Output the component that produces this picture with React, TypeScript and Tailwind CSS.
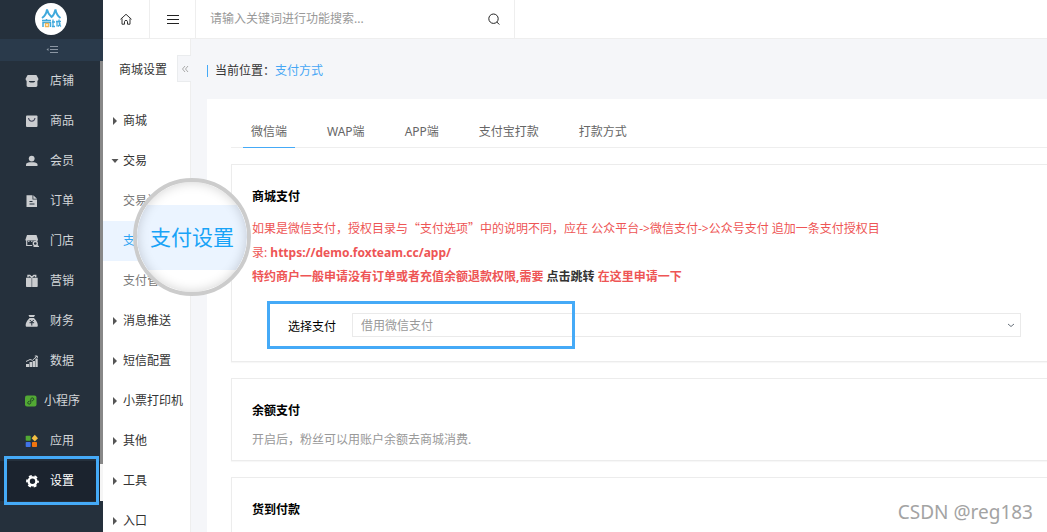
import type { ReactNode } from "react";

const solid = "size-[14px] shrink-0";

function ShopIcon() {
  return (
    <svg className={solid} viewBox="0 0 14 14" fill="#cbcdd0" aria-hidden="true">
      <path d="M2.600 1h8.800l1.900 3.400c.3 1.200-.3 2.300-1.400 2.600H2.100C1 6.700.400 5.600.700 4.400z" />
      <path d="M1.600 7h2.200c.3 1.300 1.200 1.600 3.200 1.600S9.900 8.300 10.200 7h2.200v4.500c0 .8-.6 1.400-1.400 1.400H3c-.8 0-1.400-.6-1.400-1.400z" />
    </svg>
  );
}

function BagIcon() {
  return (
    <svg className={solid} viewBox="0 0 14 14" aria-hidden="true">
      <rect x="1" y="1.500" width="11.500" height="11.500" rx="1" fill="#cbcdd0" />
      <path d="M3.500 4c.7 4.300 5.800 4.300 6.500 0" fill="none" stroke="#44475c" strokeWidth="1.100" />
    </svg>
  );
}

function UserIcon() {
  return (
    <svg className={solid} viewBox="0 0 14 14" fill="#cbcdd0" aria-hidden="true">
      <circle cx="6.700" cy="4.600" r="2.900" />
      <path d="M1 12V10.500C1 9 3 8.400 4.500 8.200h4.400c1.500.2 3.600.8 3.600 2.300V12z" />
    </svg>
  );
}

function OrderIcon() {
  return (
    <svg className={solid} viewBox="0 0 14 14" aria-hidden="true">
      <path d="M1.500 1.200H7.500V5.500H12V13H1.500zM8.300 1.200 12 4.800H8.300z" fill="#cbcdd0" />
      <path d="M4.500 7.500h3M4.500 10h5" stroke="#25303c" strokeWidth="1" />
    </svg>
  );
}

function StoreIcon() {
  return (
    <svg className={solid} viewBox="0 0 14 14" aria-hidden="true">
      <path d="M2 1h9.500l1.500 4.500v1H.500v-1z" fill="#cbcdd0" />
      <path d="M1.700 5.500v6h5.500M11.700 5.500v2" fill="none" stroke="#cbcdd0" strokeWidth="1.200" />
      <path d="M3 7.300h1.500M6 7.300h1.500" stroke="#cbcdd0" />
      <circle cx="10.300" cy="9.500" r="2" fill="none" stroke="#cbcdd0" strokeWidth="1.300" />
      <path d="m11.500 11 1.800 1.500H8.500" fill="none" stroke="#cbcdd0" strokeWidth="1.100" />
    </svg>
  );
}

function GiftIcon() {
  return (
    <svg className={solid} viewBox="0 0 14 14" aria-hidden="true">
      <path d="M1 3.800h11.700V12c0 .6-.4 1-1 1H2c-.6 0-1-.4-1-1z" fill="#cbcdd0" />
      <path d="M3 3.300V1.500h1.800L6.800 3.300 8.800 1.500h1.900v1.800" fill="none" stroke="#cbcdd0" strokeWidth="1.400" />
      <path d="M6.800 4v9" stroke="#6b717a" strokeWidth=".9" />
    </svg>
  );
}

function MoneyIcon() {
  return (
    <svg className={solid} viewBox="0 0 14 14" aria-hidden="true">
      <path d="M3.500 1h6.500L9 3H4.500zM4.500 4h4.500c1.500 1.500 4 4.500 3.800 7.500 0 .8-.4 1.300-1.300 1.300H2c-.9 0-1.300-.5-1.300-1.300C.500 8.500 3 5.500 4.500 4z" fill="#cbcdd0" />
      <path d="m4.800 6 2 2 2-2M6.800 8v3.500M4.500 8.700h4.600" fill="none" stroke="#25303c" />
    </svg>
  );
}

function ChartIcon() {
  return (
    <svg className={solid} viewBox="0 0 14 14" aria-hidden="true">
      <path d="M1 10h3v3H1zM4.500 8h2.700v5H4.500zM7.700 7h2.300v6H7.700zM10.400 4.500h2.300V13h-2.300z" fill="#cbcdd0" />
      <path d="m1 7.500 4-2 2.500.8L12 2M9.800 2h2.500v2" fill="none" stroke="#cbcdd0" strokeWidth="1" />
    </svg>
  );
}

function MiniProgramIcon() {
  return (
    <svg className="size-3 shrink-0" viewBox="0 0 12 12" aria-hidden="true">
      <rect x="0" y=".5" width="11.500" height="11" rx="2" fill="#52a934" />
      <path d="M4.200 6.200c-2 .2-2 2.900 0 2.900 1 0 1.600-.7 1.600-1.600V4.500c0-1 .7-1.600 1.500-1.600 2 0 2 2.700 0 2.900" fill="none" stroke="#1d3f28" strokeWidth="1" strokeLinecap="round" />
    </svg>
  );
}

function AppsIcon() {
  return (
    <svg className={solid} viewBox="0 0 14 14" aria-hidden="true">
      <rect x=".7" y="1.700" width="5" height="5" rx=".8" fill="#52a934" />
      <path d="m9.800.800 3.200 3.400-3.200 3.300-3.200-3.300z" fill="#f4bf42" />
      <rect x=".7" y="8" width="5" height="5" rx=".8" fill="#4173e6" />
      <rect x="7" y="8" width="5" height="5" rx=".8" fill="#f0740f" />
    </svg>
  );
}

function GearIcon() {
  return (
    <svg className={solid} viewBox="0 0 14 14" aria-hidden="true">
      <circle cx="7.500" cy="7.300" r="3.900" fill="none" stroke="#fff" strokeWidth="2.400" />
      <circle cx="7.500" cy="7.300" r="5.500" fill="none" stroke="#fff" strokeWidth="1.800" strokeDasharray="2.900 2.860" strokeDashoffset="1.450" />
    </svg>
  );
}

type MainItem = { label: string; icon: ReactNode; gap: string; active?: boolean };

const mainItems: MainItem[] = [
  { label: "店铺", icon: <ShopIcon />, gap: "gap-[11px]" },
  { label: "商品", icon: <BagIcon />, gap: "gap-[11px]" },
  { label: "会员", icon: <UserIcon />, gap: "gap-[11px]" },
  { label: "订单", icon: <OrderIcon />, gap: "gap-[11px]" },
  { label: "门店", icon: <StoreIcon />, gap: "gap-[11px]" },
  { label: "营销", icon: <GiftIcon />, gap: "gap-[11px]" },
  { label: "财务", icon: <MoneyIcon />, gap: "gap-[11px]" },
  { label: "数据", icon: <ChartIcon />, gap: "gap-[11px]" },
  { label: "小程序", icon: <MiniProgramIcon />, gap: "gap-[7px]" },
  { label: "应用", icon: <AppsIcon />, gap: "gap-[11px]" },
  { label: "设置", icon: <GearIcon />, gap: "gap-[11px]", active: true },
];

function MainSidebar() {
  return (
    <aside className="w-[103px] shrink-0 bg-[#25303c]">
      <div className="flex h-[39px] items-center justify-center pr-0.5 pb-0.5">
        <svg className="size-8" viewBox="0 0 32 32" aria-label="商城" role="img">
          <circle cx="16" cy="16" r="16" fill="#fff" />
          <g fill="none" stroke="#3fa9dc" strokeWidth="1.900">
            <path d="M7 15c3-2 4.500-5 5-8.500.7 3 2 5.500 4.500 7.500M16 14.500c2.500-2 3.800-4.500 4.500-8 .6 3.500 2 6.500 5 8.500" />
            <path d="M7 17.500h9M11.500 16v1.500M8 24V19.500h7.500V24" strokeWidth="1.500" />
            <path d="M18 16.500v7M17 19h3M21 18.500h5M22 18.500v5M24 16.500c0 4 .5 6 2 7M17 23.500h3M25.500 20.500 23 23.500" strokeWidth="1.300" />
          </g>
          <path d="M10.500 20.500h3v3h-3z" fill="none" stroke="#f2b552" strokeWidth="1.300" />
        </svg>
      </div>
      <button type="button" aria-label="收起菜单" className="flex h-[22px] w-full items-center justify-center bg-[#2a3a4b]">
        <svg className="size-3" viewBox="0 0 12 12" fill="none" stroke="#8b96a3" aria-hidden="true">
          <path d="M4 2.500h8M4 5.500h8M4 8.500h8" />
          <path d="M2.500 4v3L.500 5.500z" fill="#8b96a3" stroke="none" />
        </svg>
      </button>
      <div className="flex">
        <nav className="flex-1">
          {mainItems.map((item) => (
            <div key={item.label} className="relative">
              <a
                href="#"
                className={`flex h-10 items-center ${item.gap} pl-[25px] ${item.active ? "bg-[#1b232e] text-white" : "text-[#d3d6d9]"}`}
              >
                {item.icon}
                {item.label}
              </a>
              {item.active && (
                <div className="pointer-events-none absolute -top-[5px] right-px -bottom-1 left-1 z-10 border-3 border-[#45aaf7]" />
              )}
            </div>
          ))}
        </nav>
        <div className="w-[3px] bg-[#f5f5f5]">
          <div className="h-11/12 bg-[#888888]" />
        </div>
      </div>
    </aside>
  );
}

function TopBar() {
  return (
    <header className="flex h-[39px] shrink-0 border-b border-[#eeeeee] bg-white text-[#333]">
      <button type="button" aria-label="首页" className="flex w-[47px] items-center justify-center border-r border-[#eeeeee]">
        <svg className="size-3" viewBox="0 0 12 12" fill="none" stroke="currentColor" aria-hidden="true">
          <path d="m.5 6.300 5.500-5 5.500 5M2 5.500v5.700h2.500V8.700c0-1.800 3-1.800 3 0v2.500H10V5.500" />
        </svg>
      </button>
      <button type="button" aria-label="菜单" className="flex w-[46px] items-center justify-center border-r border-[#eeeeee]">
        <svg className="size-3" viewBox="0 0 12 12" stroke="#222" aria-hidden="true">
          <path d="M0 2.500h12M0 6.500h12M0 10.500h12" />
        </svg>
      </button>
      <form className="flex w-[319px] items-center border-r border-[#eeeeee] px-3.5">
        <input
          type="text"
          aria-label="功能搜索"
          placeholder="请输入关键词进行功能搜索..."
          className="min-w-0 flex-1 bg-transparent outline-none placeholder:text-[#999]"
        />
        <button type="button" aria-label="搜索">
          <svg className="size-3" viewBox="0 0 12 12" fill="none" stroke="#222" aria-hidden="true">
            <circle cx="5.500" cy="5.700" r="4.700" />
            <path d="m8.800 9 2.500 2.500" />
          </svg>
        </button>
      </form>
    </header>
  );
}

function Caret({ open = false }: { open?: boolean }) {
  return (
    <svg className="size-2 shrink-0" viewBox="0 0 8 8" fill="#555" aria-hidden="true">
      <path d={open ? "M.5 2h7L4 6z" : "M2 0v8l4-4z"} />
    </svg>
  );
}

function MenuGroup({ label, open = false }: { label: string; open?: boolean }) {
  return (
    <a href="#" className="flex h-10 items-center gap-1 pl-2 whitespace-nowrap text-[#333]">
      <Caret open={open} />
      {label}
    </a>
  );
}

function Magnifier() {
  return (
    <div className="absolute top-[139px] left-[30px] z-20 flex size-[118px] items-center overflow-hidden rounded-full border-4 border-[#cccccc] bg-white">
      <div className="flex h-[65px] w-full items-center justify-center bg-[#ebf4ff] text-[21px] whitespace-nowrap text-[#18a3f7]">
        支付设置
      </div>
      <div className="absolute inset-0 rounded-full shadow-[inset_0_0_12px_rgba(0,0,0,0.18)]" />
    </div>
  );
}

function SettingsMenu() {
  const sub = "flex h-10 items-center pl-5 whitespace-nowrap";
  return (
    <aside className="relative w-22 shrink-0 border-r border-[#eeeeee] bg-white">
      <h2 className="flex h-[62px] items-center pl-4 text-[#333]">商城设置</h2>
      <button
        type="button"
        aria-label="收起"
        className="absolute top-4 -right-px flex h-[27px] w-3.5 items-center justify-center border border-r-0 border-[#eaecee] bg-[#f5f6f9]"
      >
        <svg className="size-2" viewBox="0 0 8 8" fill="none" stroke="#aaa" aria-hidden="true">
          <path d="M4 1 1.500 4 4 7M7 1 4.500 4 7 7" />
        </svg>
      </button>
      <nav>
        <MenuGroup label="商城" />
        <MenuGroup label="交易" open />
        <a href="#" className={`${sub} text-[#777]`}>交易设置</a>
        <a href="#" className={`${sub} bg-[#ebf4ff] text-[#2da3f2]`}>支付设置</a>
        <a href="#" className={`${sub} text-[#777]`}>支付管理</a>
        <MenuGroup label="消息推送" />
        <MenuGroup label="短信配置" />
        <MenuGroup label="小票打印机" />
        <MenuGroup label="其他" />
        <MenuGroup label="工具" />
        <MenuGroup label="入口" />
      </nav>
      <Magnifier />
    </aside>
  );
}

function Card({ title, children }: { title: string; children?: ReactNode }) {
  return (
    <section className="mb-4 border border-r-0 border-[#ececec] px-5 pt-5 pb-2 leading-6 shadow-[0_1px_1px_rgba(0,0,0,0.03)]">
      <h3 className="font-bold text-black">{title}</h3>
      {children}
    </section>
  );
}

const tabs = ["微信端", "WAP端", "APP端", "支付宝打款", "打款方式"];

function Content() {
  return (
    <main className="min-w-0 flex-1 overflow-hidden bg-[#f5f6f9] pl-4">
      <div className="flex h-[60px] items-center pt-1">
        <div className="flex h-3 items-center border-l border-[#45aaf7] pl-[7px] text-[#333]">
          当前位置：<a href="#" className="text-[#45a6f5]">支付方式</a>
        </div>
      </div>
      <div className="min-h-[600px] bg-white pl-6">
        <div role="tablist" className="mb-4 flex h-[49px] items-end gap-6 border-b border-[#eeeeee] pl-3">
          {tabs.map((tab, i) => (
            <button
              key={tab}
              type="button"
              role="tab"
              aria-selected={i === 0}
              className={`-mb-px h-8 border-b px-2 text-[#666] ${i === 0 ? "border-[#45aaf7]" : "border-transparent"}`}
            >
              {tab}
            </button>
          ))}
        </div>
        <Card title="商城支付">
          <div className="mt-[7px] max-w-[638px] text-[#ee5555]">
            <p>
              如果是微信支付，授权目录与<span className="font-['Noto_Sans_CJK_SC',sans-serif]">“</span>支付选项
              <span className="font-['Noto_Sans_CJK_SC',sans-serif]">”</span>中的说明不同，应在 公众平台-&gt;微信支付-&gt;公众号支付 追加一条支付授权目录:{" "}
              <b>https://demo.foxteam.cc/app/</b>
            </p>
            <p className="font-bold">
              特约商户一般申请没有订单或者充值余额退款权限,需要 <a href="#" className="text-[#333]">点击跳转</a> 在这里申请一下
            </p>
          </div>
          <div className="relative mt-3 mr-1.5 mb-1 ml-[15px] flex h-12 items-center pl-[21px]">
            <label htmlFor="pay" className="mr-4 pt-1 text-black">选择支付</label>
            <div className="relative flex-1">
              <select id="pay" className="block h-6 w-full appearance-none border border-[#eaeaea] bg-white px-2 text-[#999] outline-none">
                <option>借用微信支付</option>
              </select>
              <svg className="pointer-events-none absolute top-2 right-1.5 size-2" viewBox="0 0 8 8" fill="none" stroke="#68717b" aria-hidden="true">
                <path d="m1 3 3 2.500L7 3" />
              </svg>
            </div>
            <div className="pointer-events-none absolute inset-y-0 left-0 w-[308px] border-3 border-[#45aaf7]" />
          </div>
        </Card>
        <Card title="余额支付">
          <p className="mt-[5px] text-[#999]">开启后，粉丝可以用账户余额去商城消费.</p>
        </Card>
        <Card title="货到付款">
          <p className="mt-[5px] text-[#999]">&nbsp;</p>
        </Card>
      </div>
    </main>
  );
}

export default function App() {
  return (
    <div className="relative flex h-screen overflow-hidden bg-white font-['Noto_Sans','Noto_Sans_CJK_SC',sans-serif] text-xs">
      <MainSidebar />
      <div className="flex min-w-0 flex-1 flex-col">
        <TopBar />
        <div className="flex min-h-0 flex-1">
          <SettingsMenu />
          <Content />
        </div>
      </div>
      <div className="pointer-events-none absolute right-3.5 bottom-[7px] text-[19px] text-[#a3a3a3] [text-shadow:1px_1px_0_#ffffff]">
        CSDN @reg183
      </div>
    </div>
  );
}
